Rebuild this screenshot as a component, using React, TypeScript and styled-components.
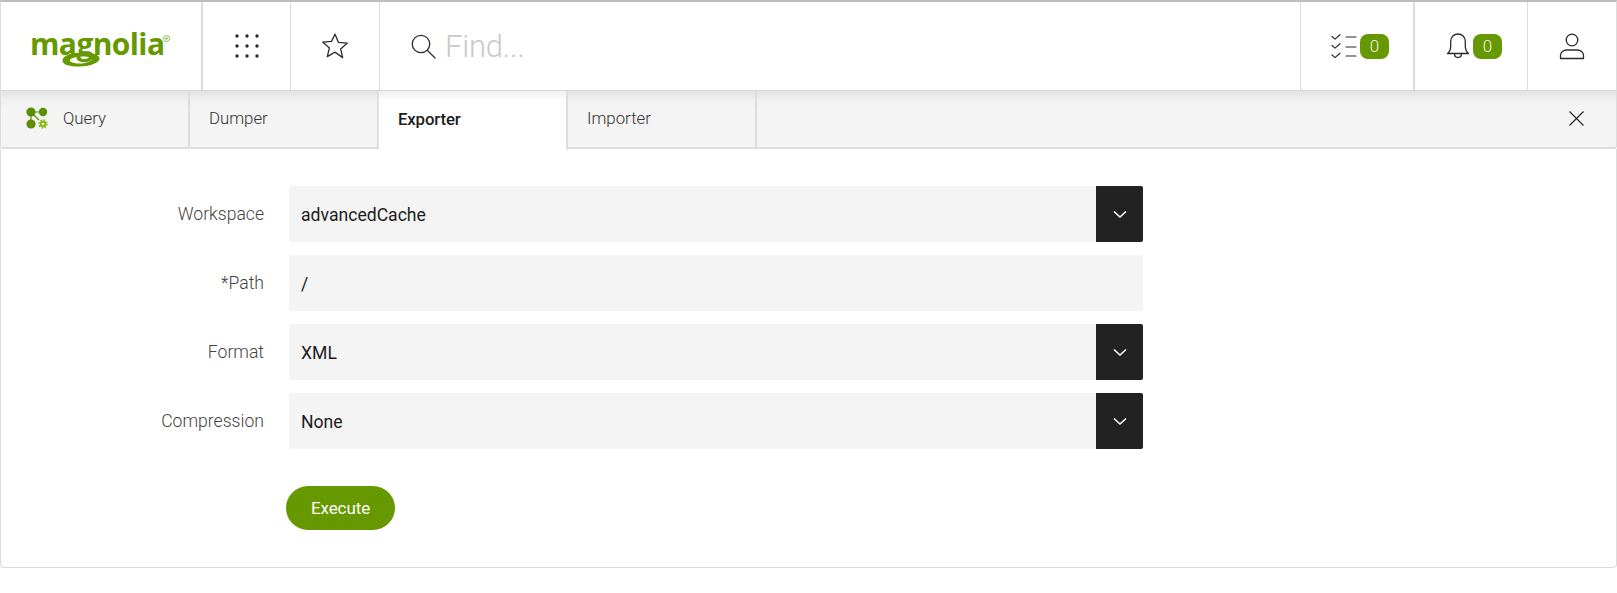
import React from "react";
import styled, { createGlobalStyle } from "styled-components";

const Global = createGlobalStyle`
  html, body { margin: 0; padding: 0; background: #fff; }
  body { font-family: Roboto, "Liberation Sans", sans-serif; color: #222; }
`;

const Page = styled.div`
  width: 1617px;
  height: 593px;
  overflow: hidden;
  display: flex;
  flex-direction: column;
  background: #fff;
`;

const Header = styled.header`
  height: 88px;
  flex: none;
  display: flex;
  border-top: 2px solid #bdbdbd;
  border-bottom: 1px solid #d6d6d6;
  border-left: 1px solid #dcdcdc;
  border-right: 1px solid #dcdcdc;
  position: relative;
  z-index: 2;
`;

const LogoCell = styled.div`
  width: 202px;
  flex: none;
  display: flex;
  align-items: center;
  padding-left: 29px;
  border-right: 2px solid #dcdcdc;
  box-sizing: border-box;
`;

const Logo = styled.div`
  position: relative;
  top: 1px;
  height: 34px;
  width: 140px;
  font-family: "Open Sans", sans-serif;
  font-weight: 700;
  font-size: 30px;
  line-height: 28px;
  letter-spacing: -0.6px;
  color: #669900;
`;

const Swoosh = styled.svg`
  position: absolute;
  left: 32px;
  top: 22px;
  width: 38px;
  height: 15px;
`;

const Registered = styled.svg`
  position: absolute;
  left: 133px;
  top: 5px;
  width: 7px;
  height: 7px;
`;

const IconCell = styled.div<{ $w: number; $thick?: boolean; $nudge?: number }>`
  width: ${(p) => p.$w}px;
  flex: none;
  display: flex;
  align-items: center;
  justify-content: center;
  gap: 3px;
  box-sizing: border-box;
  padding-left: ${(p) => p.$nudge ?? 0}px;
  border-right: ${(p) => (p.$thick ? 2 : 1)}px solid #dcdcdc;
`;

const LastCell = styled(IconCell)`
  border-right: none;
`;

const Search = styled.div`
  flex: 1;
  display: flex;
  align-items: center;
  padding-left: 31px;
  gap: 9px;
  border-right: 1px solid #dcdcdc;
`;

const FindText = styled.span`
  font-size: 31px;
  font-weight: 300;
  color: #c9c9c9;
  letter-spacing: -0.2px;
`;

const Badge = styled.span`
  width: 29px;
  height: 25px;
  border-radius: 8px;
  background: #669900;
  color: #f2f7e8;
  font-size: 17px;
  font-weight: 300;
  display: flex;
  align-items: center;
  justify-content: center;
`;

const TabBar = styled.nav`
  height: 58px;
  flex: none;
  display: flex;
  box-sizing: border-box;
  background: linear-gradient(#e3e3e3 0, #f0f0f0 9px, #f4f4f4 16px);
  border-bottom: 2px solid #dddddd;
  border-left: 1px solid #dcdcdc;
  border-right: 1px solid #dcdcdc;
  border-radius: 0 0 3px 3px;
`;

const Tab = styled.div<{ $active?: boolean; $w: number }>`
  width: ${(p) => p.$w}px;
  flex: none;
  box-sizing: border-box;
  display: flex;
  align-items: center;
  gap: 15px;
  padding-left: 19px;
  padding-bottom: ${(p) => (p.$active ? 3 : 2)}px;
  font-size: 16.8px;
  font-weight: ${(p) => (p.$active ? 500 : 300)};
  letter-spacing: ${(p) => (p.$active ? "-0.15px" : "0")};
  color: ${(p) => (p.$active ? "#1c1c1c" : "#333")};
  border-right: 2px solid #dddddd;
  ${(p) =>
    p.$active
      ? `background: linear-gradient(#efefef 0, #fff 10px); height: 59px; border-left: 1px solid #e4e4e4; margin-left: -1px;`
      : ""}
`;

const QueryTab = styled(Tab)`
  padding-left: 25px;
`;

const TabSpacer = styled.div`
  flex: 1;
`;

const CloseBox = styled.div`
  width: 56px;
  display: flex;
  align-items: center;
  justify-content: center;
  padding-right: 23px;
  padding-bottom: 2px;
  box-sizing: border-box;
`;

const Content = styled.main`
  height: 419px;
  flex: none;
  box-sizing: border-box;
  border-left: 1px solid #dcdcdc;
  border-right: 1px solid #dcdcdc;
  border-bottom: 1px solid #dcdcdc;
  border-radius: 0 0 4px 4px;
  padding: 37px 0 0 0;
`;

const Form = styled.div`
  display: grid;
  grid-template-columns: 263px 854px;
  column-gap: 25px;
  row-gap: 13px;
`;

const Label = styled.label`
  font-size: 17.6px;
  font-weight: 300;
  color: #444;
  text-align: right;
  line-height: 57px;
  height: 56px;
`;

const Field = styled.div`
  height: 56px;
  background: #f4f4f4;
  display: flex;
  align-items: center;
  justify-content: space-between;
  font-size: 17.6px;
  color: #1c1c1c;
  padding-left: 12px;
  box-sizing: border-box;
  border-radius: 2px;
`;

const FieldText = styled.span`
  position: relative;
  top: 1px;
`;

const Caret = styled.div`
  width: 47px;
  height: 56px;
  background: #222222;
  border-radius: 0 2px 2px 0;
  display: flex;
  align-items: center;
  justify-content: center;
`;

const Actions = styled.div`
  padding: 37px 0 0 285px;
`;

const Execute = styled.button`
  width: 109px;
  height: 44px;
  border: none;
  border-radius: 22px;
  background: #669900;
  color: #fff;
  font-family: inherit;
  font-size: 17px;
  font-weight: 400;
  padding: 0;
  letter-spacing: -0.1px;
`;

const stroke = { fill: "none", stroke: "#2b2b2b", strokeLinecap: "round" as const, strokeLinejoin: "round" as const };

const GridIcon = () => (
  <svg width="26" height="26" viewBox="0 0 26 26" fill="#2b2b2b">
    {[3, 13, 23].flatMap((y) => [3, 13, 23].map((x) => <circle key={`${x}-${y}`} cx={x} cy={y} r="1.7" />))}
  </svg>
);
const StarIcon = () => (
  <svg width="28" height="28" viewBox="0 0 28 28" {...stroke} strokeWidth="1.3">
    <path d="M14 2.2l3.5 8.2 8.9.7-6.8 5.8 2.1 8.7L14 20.1l-7.7 4.5 2.1-8.7-6.8-5.800 8.900-.7z" />
  </svg>
);
const SearchIcon = () => (
  <svg width="25" height="25" viewBox="0 0 25 25" {...stroke} strokeWidth="1.3">
    <circle cx="10" cy="10" r="8.700" />
    <path d="M16.500 16.500l7.500 7.500" />
  </svg>
);
const TasksIcon = () => (
  <svg width="26" height="27" viewBox="0 0 26 27" {...stroke} strokeWidth="1.2">
    <path d="M1 3.500l3 2.600L9 1.700M1 12.500l3 2.600 5-4.400M1 22l3 2.600 5-4.400" />
    <path d="M15 4h10M15 14h10M15 23h10" />
  </svg>
);
const BellIcon = () => (
  <svg width="24" height="28" viewBox="0 0 24 28" {...stroke} strokeWidth="1.3">
    <path d="M1.500 21.500c2.500-2 3.200-4.200 3.200-7.500V9.500C4.700 5 8 2 12 2s7.300 3 7.300 7.500V14c0 3.300.7 5.500 3.200 7.500z" />
    <path d="M8.500 21.500c0 2.500 1.500 4 3.500 4s3.500-1.500 3.500-4" />
  </svg>
);
const UserIcon = () => (
  <svg width="26" height="27" viewBox="0 0 26 27" {...stroke} strokeWidth="1.3">
    <circle cx="13" cy="7" r="5.800" />
    <path d="M1.500 25.500v-3c0-3.500 3-5.500 6-5.500h11c3 0 6 2 6 5.500v3z" />
  </svg>
);
const CloseIcon = () => (
  <svg width="15" height="15" viewBox="0 0 15 15" fill="none" stroke="#222" strokeWidth="1.100">
    <path d="M.5.500l14 14M14.500.500l-14 14" />
  </svg>
);
const ChevronIcon = () => (
  <svg width="14" height="9" viewBox="0 0 14 9" fill="none" stroke="#fff" strokeWidth="1.600">
    <path d="M1 1.500l6 5.500 6-5.500" />
  </svg>
);
const QueryIcon = () => (
  <svg width="22" height="22" viewBox="0 0 22 22">
    <path d="M5 5l12 0M5 5l0 12M5 5l8 8" stroke="#5c8f00" strokeWidth="1.200" fill="none" />
    <circle cx="5" cy="5" r="4.600" fill="#5c8f00" />
    <circle cx="17" cy="5" r="4.200" fill="#5c8f00" />
    <circle cx="5" cy="17" r="4.600" fill="#5c8f00" />
    <circle cx="17" cy="17" r="3.200" fill="#7fb800" />
    <circle cx="17" cy="17" r="4" fill="none" stroke="#7fb800" strokeWidth="1.500" strokeDasharray="1.500 1.640" />
    <circle cx="17" cy="17" r="1.300" fill="#fff" />
  </svg>
);

const rows = [
  { label: "Workspace", value: "advancedCache", select: true },
  { label: "*Path", value: "/", select: false },
  { label: "Format", value: "XML", select: true },
  { label: "Compression", value: "None", select: true },
];

export default function App() {
  return (
    <Page>
      <Global />
      <Header>
        <LogoCell>
          <Logo>
            magnolia
            <Swoosh viewBox="0 0 38 15">
              <path
                fillRule="evenodd"
                fill="#669900"
                d="M21 .5C9 .5.500 4 .5 8.500s7.500 6 17 6S37.500 11 37.500 6.500C37.500 2.500 30 .5 21 .5zM20 4.500c5 0 10 .5 10 2.500s-6 4.500-12 4.500S7 10 8 8s7-3.500 12-3.500z"
              />
            </Swoosh>
            <Registered viewBox="0 0 7 7">
              <circle cx="3.500" cy="3.500" r="3" fill="none" stroke="#8fb84a" strokeWidth="1" />
              <circle cx="3.500" cy="3.500" r="1.200" fill="#8fb84a" />
            </Registered>
          </Logo>
        </LogoCell>
        <IconCell $w={88}><GridIcon /></IconCell>
        <IconCell $w={89}><StarIcon /></IconCell>
        <Search>
          <SearchIcon />
          <FindText>Find...</FindText>
        </Search>
        <IconCell $w={114} $thick $nudge={6}><TasksIcon /><Badge>0</Badge></IconCell>
        <IconCell $w={113} $nudge={6}><BellIcon /><Badge>0</Badge></IconCell>
        <LastCell $w={88}><UserIcon /></LastCell>
      </Header>
      <TabBar>
        <QueryTab $w={189}><QueryIcon />Query</QueryTab>
        <Tab $w={189}>Dumper</Tab>
        <Tab $w={190} $active>Exporter</Tab>
        <Tab $w={189}>Importer</Tab>
        <TabSpacer />
        <CloseBox><CloseIcon /></CloseBox>
      </TabBar>
      <Content>
        <Form>
          {rows.map((r) => (
            <React.Fragment key={r.label}>
              <Label>{r.label}</Label>
              <Field>
                <FieldText>{r.value}</FieldText>
                {r.select && (
                  <Caret><ChevronIcon /></Caret>
                )}
              </Field>
            </React.Fragment>
          ))}
        </Form>
        <Actions>
          <Execute>Execute</Execute>
        </Actions>
      </Content>
    </Page>
  );
}
